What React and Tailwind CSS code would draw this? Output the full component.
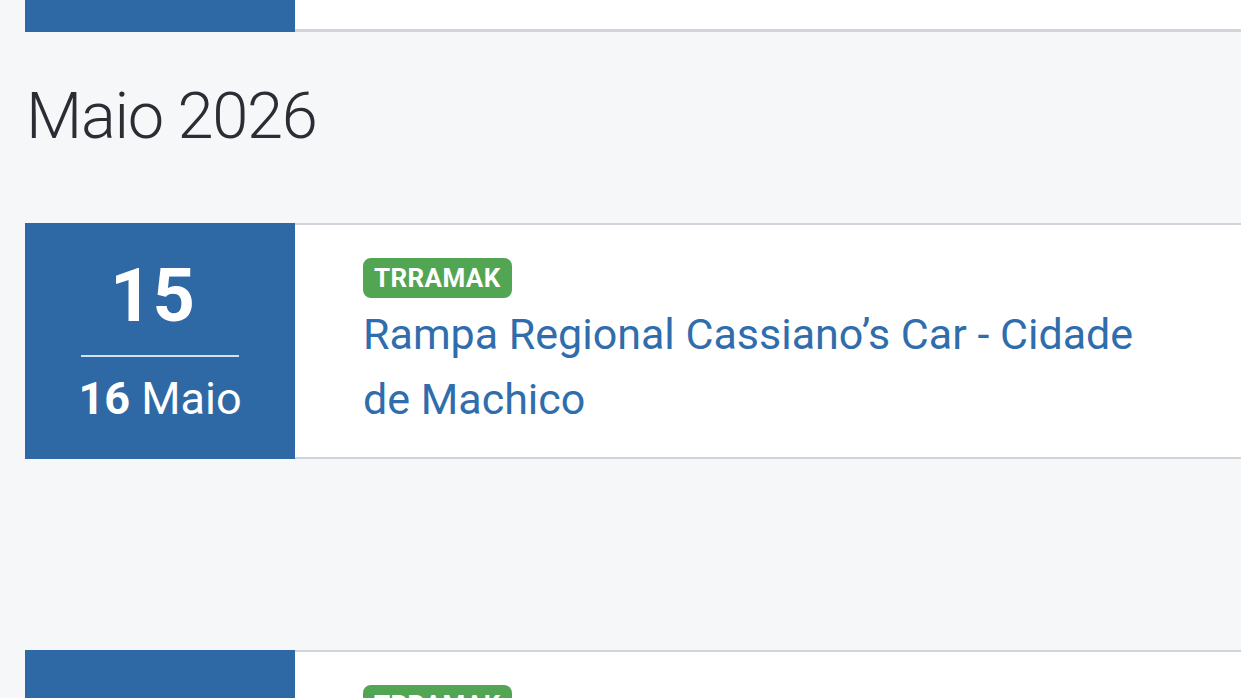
export default function App() {
  const font = { fontFamily: "Roboto, 'Open Sans', sans-serif" };
  return (
    <div className="w-[1241px] h-[698px] overflow-hidden bg-[#f6f7f9]" style={font}>
      <div className="pl-[25px]">
        {/* previous card tail */}
        <div className="flex h-[32px]">
          <div className="w-[270px] bg-[#2e69a5]" />
          <div className="flex-1 bg-white border-b-[3px] border-[#d1d4da]" />
        </div>

        <div className="h-[191px] flex items-center">
          <h2 className="text-[65px] font-light text-[#2a2d33] leading-none pl-[1px] -mt-[22px] tracking-[-0.02em]">
            Maio 2026
          </h2>
        </div>

        <EventCard from="15" to="16" month="Maio" title="Rampa Regional Cassiano’s Car - Cidade de Machico" />

        <div className="h-[191px]" />

        <EventCard from="" to="" month="" title="" partial />
      </div>
    </div>
  );
}

function EventCard({ from, to, month, title, partial }) {
  return (
    <div className="flex h-[236px]">
      <div className="w-[270px] shrink-0 bg-[#2e69a5] text-white flex flex-col items-center">
        {!partial && (
          <>
            <div className="mt-[28px] text-[74px] font-bold leading-[90px] pr-[15px]">{from}</div>
            <div className="mt-[14px] w-[158px] h-[2px] bg-white/80" />
            <div className="mt-[16px] text-[45px] leading-[52px]">
              <span className="font-bold">{to}</span> {month}
            </div>
          </>
        )}
      </div>
      <div className="flex-1 bg-white border-y-[2px] border-[#d1d4da] pl-[68px] pr-[60px] pt-[33px]">
        <span className="inline-block bg-[#52a552] text-white font-bold text-[26px] leading-[40px] px-[11px] rounded-[8px] tracking-[0.015em]">
          TRRAMAK
        </span>
        {!partial && (
          <div className="text-[#2f6dac] text-[43px] leading-[65px] mt-[4px]">{title}</div>
        )}
      </div>
    </div>
  );
}
